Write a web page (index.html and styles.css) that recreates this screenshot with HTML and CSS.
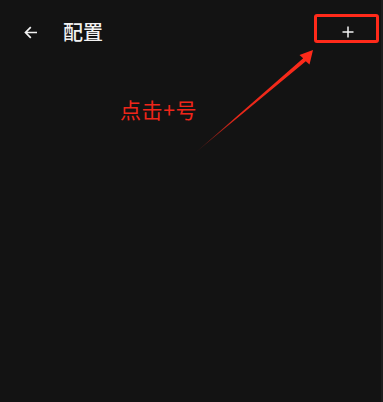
FILE: index.html
```html
<!DOCTYPE html>
<html lang="zh-CN">
<head>
<meta charset="utf-8">
<title>配置</title>
<link rel="stylesheet" href="styles.css">
</head>
<body>
<div class="page">
  <header class="bar">
    <button class="back" aria-label="返回">
      <svg width="14" height="13" viewBox="0 0 14 13"><path d="M13 6.5H1.6M6.8 1.2L1.5 6.5l5.3 5.3" fill="none" stroke="#f2f2f2" stroke-width="1.7"/></svg>
    </button>
    <h1 class="title">配置</h1>
    <button class="add" aria-label="添加">
      <svg width="12" height="12" viewBox="0 0 12 12"><path d="M6 0.5v11M0.5 6h11" fill="none" stroke="#f2f2f2" stroke-width="1.5"/></svg>
    </button>
  </header>
  <p class="hint">点击+号</p>
  <svg class="pointer" width="383" height="402" viewBox="0 0 383 402">
    <defs>
      <linearGradient id="fade" gradientUnits="userSpaceOnUse" x1="195" y1="153" x2="313" y2="50">
        <stop offset="0" stop-color="#ff2a1a" stop-opacity="0.15"/>
        <stop offset="0.35" stop-color="#ff2a1a" stop-opacity="0.9"/>
        <stop offset="1" stop-color="#ff2a1a"/>
      </linearGradient>
    </defs>
    <polygon points="195,153 303.2,58.2 299.5,55 313,50 309.5,64.5 305.8,61.3" fill="url(#fade)"/>
  </svg>
</div>
</body>
</html>
```
FILE: styles.css
```css
html, body {
  margin: 0;
  padding: 0;
  background: #131313;
}
.page {
  position: relative;
  width: 383px;
  height: 402px;
  box-sizing: border-box;
  border-right: 2px solid #1d1d1d;
  overflow: hidden;
  font-family: "Noto Sans CJK SC", "Noto Sans", sans-serif;
}
.bar {
  display: flex;
  align-items: center;
  height: 64px;
  padding-left: 24px;
}
.back {
  display: flex;
  padding: 0;
  margin: 0;
  border: 0;
  background: none;
}
.title {
  margin: 0 0 0 25px;
  font-size: 20px;
  font-weight: 500;
  line-height: 1;
  color: #f2f2f2;
}
.add {
  align-self: flex-start;
  margin: 14px 2px 0 auto;
  width: 65px;
  height: 29px;
  box-sizing: border-box;
  border: 3px solid #ff2a1a;
  border-radius: 3px;
  background: none;
  display: flex;
  justify-content: center;
  align-items: center;
  padding: 6px 0 0 2px;
}
.hint {
  margin: 35px 0 0 120px;
  font-size: 21px;
  line-height: 1;
  letter-spacing: 0.6px;
  color: #f0261a;
}
.pointer {
  position: absolute;
  left: 0;
  top: 0;
  pointer-events: none;
}
```
